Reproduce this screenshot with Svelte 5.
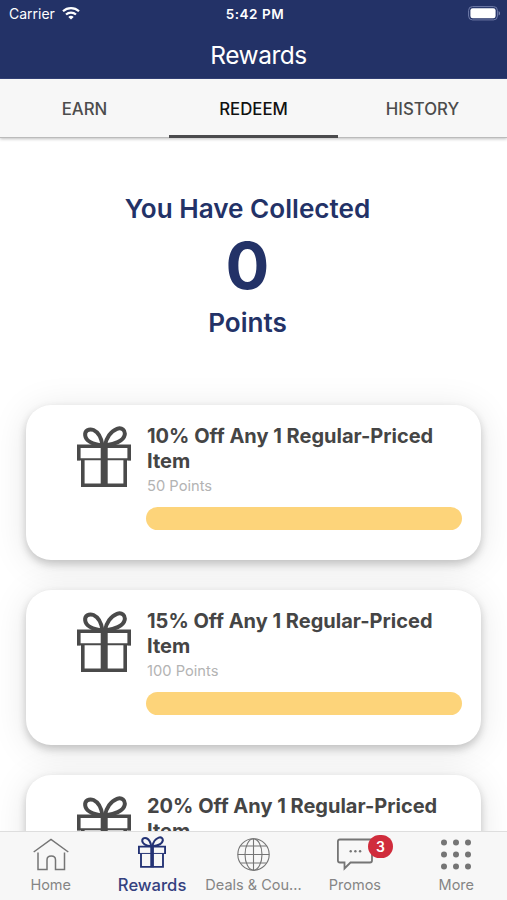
<script lang="ts">
  const tabs = ['Earn', 'Redeem', 'History'];
  let activeTab = $state('Redeem');

  const points = 0;

  const rewards = [
    { percent: 10, cost: 50 },
    { percent: 15, cost: 100 },
    { percent: 20, cost: 150 },
  ];

  const navItems = [
    { icon: 'home', label: 'Home' },
    { icon: 'gift', label: 'Rewards' },
    { icon: 'globe', label: 'Deals & Cou...' },
    { icon: 'chat', label: 'Promos', badge: 3 },
    { icon: 'grid', label: 'More' },
  ];
  const activeNav = 'Rewards';
  const dots = [3, 15, 27];
</script>

{#snippet gift()}
  <svg class="gift" viewBox="0 0 54 61" fill="none" stroke="currentColor">
    <path
      d="M25.500 19.500C18 18.500 9 15.500 8.200 9.500C7.500 4.500 12 2.300 16.500 4C22 6.500 24.500 12.500 25.500 19.500Z"
      stroke-width="4"
    />
    <path
      d="M28 19.500C29 12 34 5 40 2.800C45 1 48.500 4.500 47.700 8.800C46.500 15 37 18.500 28 19.500Z"
      stroke-width="4"
    />
    <path d="M5.800 34V59.200H48.200V34" stroke-width="3.600" />
    <path d="M1.800 34.500V20.200H52.200V34.500" stroke-width="3.600" />
    <path d="M0 33.300H54" stroke-width="1.900" />
    <path d="M27.200 19V60" stroke-width="7" />
  </svg>
{/snippet}

<div class="app">
  <header>
    <div class="status">
      <div class="carrier">
        <span>Carrier</span>
        <svg class="wifi" viewBox="0 0 18 13" fill="none" stroke="#fff">
          <path d="M1 4.300C5.500 .1 12.500 .1 17 4.300" stroke-width="2.200" />
          <path d="M4 7.500C6.800 4.900 11.200 4.900 14 7.500" stroke-width="2.200" />
          <path d="M6.300 9.900C7.900 8.500 10.100 8.500 11.700 9.900L9 12.500Z" fill="#fff" stroke="none" />
        </svg>
      </div>
      <div class="clock">5:42 PM</div>
      <svg class="battery" viewBox="0 0 33 15">
        <rect x=".6" y=".6" width="28.800" height="13.300" rx="3.800" fill="none" stroke="#707ca9" />
        <rect x="2.400" y="2.300" width="25.200" height="9.900" rx="2.300" fill="#fff" />
        <path d="M30.700 5V9.600C32.300 8.700 32.300 5.900 30.700 5Z" fill="#8c96bd" />
      </svg>
    </div>
    <h1>Rewards</h1>
  </header>

  <div class="tabs">
    {#each tabs as tab}
      <button class:active={tab === activeTab} onclick={() => (activeTab = tab)}>{tab}</button>
    {/each}
  </div>

  <main>
    <section class="summary">
      <div class="caption">You Have Collected</div>
      <div class="points">{points}</div>
      <div class="unit">Points</div>
    </section>

    <section class="rewards">
      {#each rewards as reward}
        <article>
          {@render gift()}
          <div class="details">
            <h2>{reward.percent}% Off Any 1 Regular-Priced Item</h2>
            <div class="cost">{reward.cost} Points</div>
            <div class="bar"></div>
          </div>
        </article>
      {/each}
    </section>
  </main>

  <nav>
    {#each navItems as item}
      <button class="nav-item" class:current={item.label === activeNav}>
        <span class="icon">
          {#if item.icon === 'home'}
            <svg width="36" height="33" viewBox="0 0 36 33" fill="none" stroke="currentColor" stroke-width="1.500">
              <path d="M.7 14L18 1.400L35.300 14" />
              <path d="M5 14.500V31.500H14V22C14 16.800 22.500 16.800 22.500 22V31.500H31.500V14.500" />
            </svg>
          {:else if item.icon === 'gift'}
            {@render gift()}
          {:else if item.icon === 'globe'}
            <svg width="33" height="33" viewBox="0 0 33 33" fill="none" stroke="currentColor" stroke-width="1.100">
              <circle cx="16.500" cy="16.500" r="15.700" />
              <ellipse cx="16.500" cy="16.500" rx="8.500" ry="15.700" />
              <path d="M16.500 .8V32.200M.8 16.500H32.200M3.500 8H29.500M3.500 25H29.500" />
            </svg>
          {:else if item.icon === 'chat'}
            <svg width="36" height="33" viewBox="0 0 36 33" fill="none" stroke="currentColor" stroke-width="1.800">
              <path d="M2.900 1.500H33Q35 1.500 35 3.500V22.500Q35 24.500 33 24.500H13.500L7.500 30.500V24.500H2.900Q.9 24.500 .9 22.500V3.500Q.9 1.500 2.900 1.500Z" />
              <g fill="currentColor" stroke="none">
                <circle cx="13.700" cy="13.300" r="1.200" />
                <circle cx="18.400" cy="13.300" r="1.200" />
                <circle cx="23.100" cy="13.300" r="1.200" />
              </g>
            </svg>
          {:else}
            <svg width="30" height="33" viewBox="0 0 30 33" fill="currentColor">
              {#each dots as y}
                {#each dots as x}
                  <circle cx={x} cy={y + 1.5} r="3" />
                {/each}
              {/each}
            </svg>
          {/if}
          {#if item.badge}
            <span class="badge">{item.badge}</span>
          {/if}
        </span>
        <span class="label">{item.label}</span>
      </button>
    {/each}
  </nav>
</div>

<style>
  :global(body) {
    margin: 0;
    font-family: Inter, 'Liberation Sans', sans-serif;
  }
  button {
    background: none;
    border: none;
    margin: 0;
    padding: 0;
    font: inherit;
    cursor: pointer;
  }
  h1,
  h2 {
    margin: 0;
  }

  .app {
    display: flex;
    flex-direction: column;
    height: 900px;
    overflow: hidden;
    background: #fff;
  }

  header {
    flex: none;
    box-sizing: border-box;
    height: 79px;
    background: #233267;
    border-bottom: 1px solid #34427a;
    color: #fff;

    h1 {
      padding-left: 10px;
      font-size: 24.5px;
      font-weight: 400;
      letter-spacing: -0.5px;
      line-height: 54px;
      text-align: center;
    }
  }

  .status {
    display: grid;
    grid-template-columns: 1fr auto 1fr;
    align-items: center;
    height: 28px;
    padding: 0 6px 0 9px;
    font-size: 14px;

    .carrier {
      display: flex;
      align-items: center;
      gap: 7px;
      line-height: 18px;
    }

    .carrier span {
      margin-top: -1px;
    }

    .wifi {
      width: 18px;
      height: 13px;
      margin-top: -1px;
    }

    .clock {
      font-size: 13.5px;
      font-weight: 600;
      letter-spacing: 0.55px;
    }

    .battery {
      justify-self: end;
      width: 33px;
      height: 15px;
      margin-top: -1px;
    }
  }

  .tabs {
    display: grid;
    grid-template-columns: repeat(3, 1fr);
    flex: none;
    height: 58px;
    background: #f7f7f7;
    border-bottom: 1px solid #bbb;
    box-shadow: 0 1px 3px rgba(0, 0, 0, 0.25);
    z-index: 1;

    button {
      padding-top: 3px;
      border-bottom: 3px solid transparent;
      margin-bottom: -1px;
      color: #4c4c4c;
      font-size: 16.8px;
      font-weight: 500;
      text-transform: uppercase;
    }

    .active {
      border-color: #4b4b4d;
      color: #111;
    }
  }

  main {
    flex: 1;
    min-height: 0;
    overflow: hidden;
  }

  .summary {
    padding: 53px 12px 64px 0;
    color: #233267;
    font-size: 26.1px;
    font-weight: 600;
    line-height: 36px;
    text-align: center;

    .points {
      font-size: 65px;
      font-weight: 700;
      line-height: 78px;
    }
  }

  .rewards {
    display: flex;
    flex-direction: column;
    gap: 30px;
    padding: 0 26px;
  }

  article {
    display: flex;
    align-items: flex-start;
    box-sizing: border-box;
    height: 155px;
    padding: 19px 19px 0 51px;
    border-radius: 25px;
    background: #fff;
    box-shadow:
      0 4px 8px rgba(0, 0, 0, 0.2),
      0 4px 36px rgba(0, 0, 0, 0.1);

    .gift {
      flex: none;
      width: 54px;
      height: 61px;
      margin: 2px 15px 0 0;
      color: #4a4a4a;
    }

    .details {
      flex: 1;
    }

    h2 {
      padding-left: 1px;
      color: #454545;
      font-size: 20px;
      font-weight: 700;
      line-height: 24.5px;
    }

    .cost {
      margin-top: 4px;
      padding-left: 1px;
      color: #b3b3b3;
      font-size: 14.7px;
      line-height: 18px;
    }

    .bar {
      height: 23px;
      margin-top: 12px;
      border-radius: 12px;
      background: #fdd47a;
    }
  }

  nav {
    display: grid;
    grid-template-columns: repeat(5, 1fr);
    flex: none;
    box-sizing: border-box;
    height: 69px;
    border-top: 1px solid #dedede;
    background: #f7f7f7;
    z-index: 1;
  }

  .nav-item {
    display: flex;
    flex-direction: column;
    align-items: center;
    padding-top: 6px;
    color: #757575;
    font-size: 14.5px;

    .icon {
      display: flex;
      position: relative;
      height: 33px;
    }

    .gift {
      width: 28px;
      height: 32px;
      margin-top: -2px;
    }

    .label {
      margin-top: 4px;
      color: #858585;
      line-height: 20px;
      white-space: nowrap;
    }

    .badge {
      position: absolute;
      top: -3px;
      left: 31px;
      width: 25px;
      border-radius: 12px;
      background: #d02c3c;
      color: #fff;
      font-size: 14px;
      font-weight: 600;
      line-height: 23px;
    }

    &.current {
      color: #233274;
    }

    &.current .label {
      color: #34417f;
      font-size: 16.6px;
      font-weight: 500;
    }
  }
</style>
